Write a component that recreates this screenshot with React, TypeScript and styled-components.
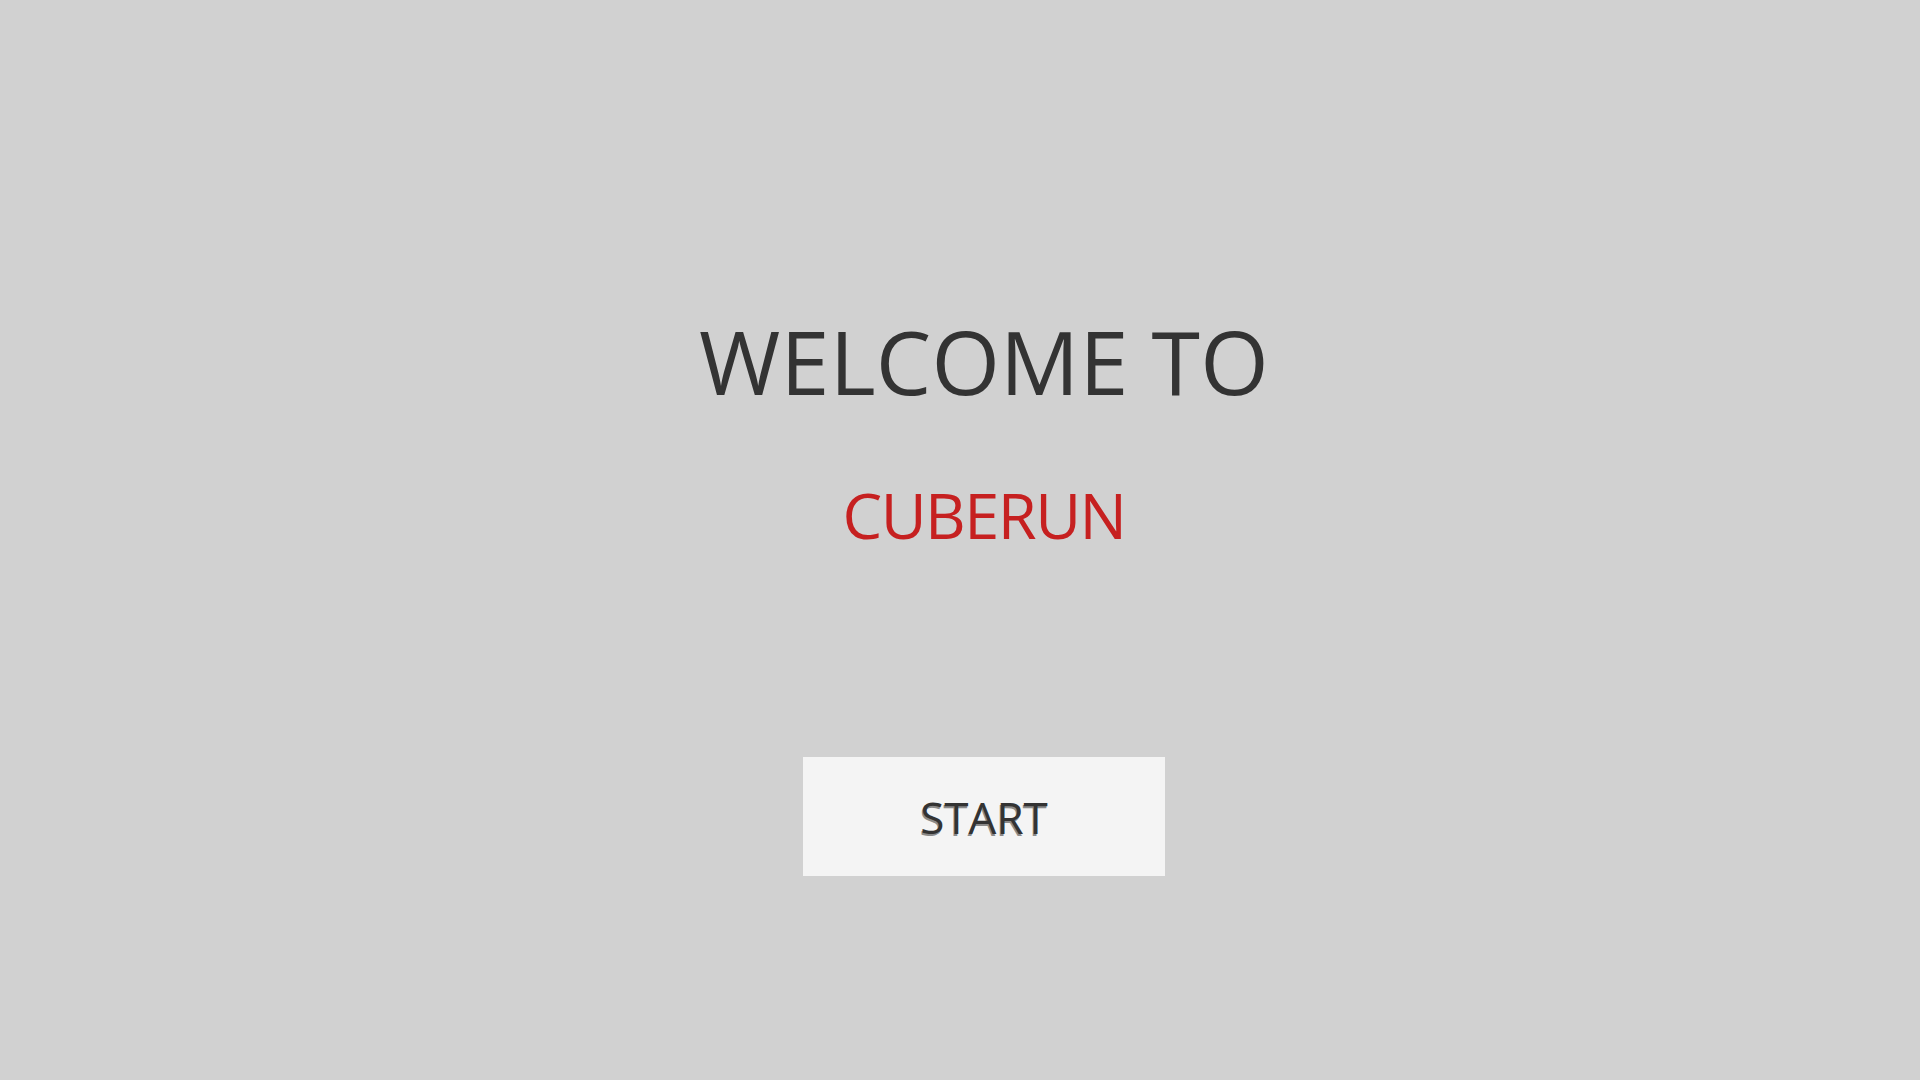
import React from "react";
import styled, { createGlobalStyle } from "styled-components";

const GlobalStyle = createGlobalStyle`
  html, body {
    margin: 0;
    padding: 0;
    background: #d1d1d1;
  }
  body {
    font-family: "Open Sans", "Liberation Sans", sans-serif;
  }
`;

const Screen = styled.main`
  min-height: 100vh;
  box-sizing: border-box;
  display: flex;
  flex-direction: column;
  align-items: center;
  padding: 309px 0 0 48px;
  background: #d1d1d1;
`;

const Title = styled.h1`
  margin: 0;
  font-family: "Open Sans", "Liberation Sans", sans-serif;
  font-weight: 400;
  font-size: 88px;
  line-height: 1.2;
  color: #333333;
  letter-spacing: 0.2px;
`;

const GameName = styled.h2`
  margin: 62px 0 0;
  font-family: "Open Sans", "Liberation Sans", sans-serif;
  font-weight: 400;
  font-size: 63px;
  line-height: 1.2;
  color: #c62020;
  letter-spacing: -1.5px;
`;

const StartButton = styled.button`
  margin-top: 205px;
  width: 362px;
  height: 119px;
  border: none;
  background: #f4f4f4;
  font-family: "Open Sans", "Liberation Sans", sans-serif;
  font-weight: 400;
  font-size: 44px;
  color: #333333;
  text-shadow: -1px 2px 0 #8a8a8a;
  cursor: pointer;
  display: flex;
  align-items: center;
  justify-content: center;
  padding: 0;
`;

export default function App() {
  return (
    <>
      <GlobalStyle />
      <Screen>
        <Title>WELCOME TO</Title>
        <GameName>CUBERUN</GameName>
        <StartButton>START</StartButton>
      </Screen>
    </>
  );
}
